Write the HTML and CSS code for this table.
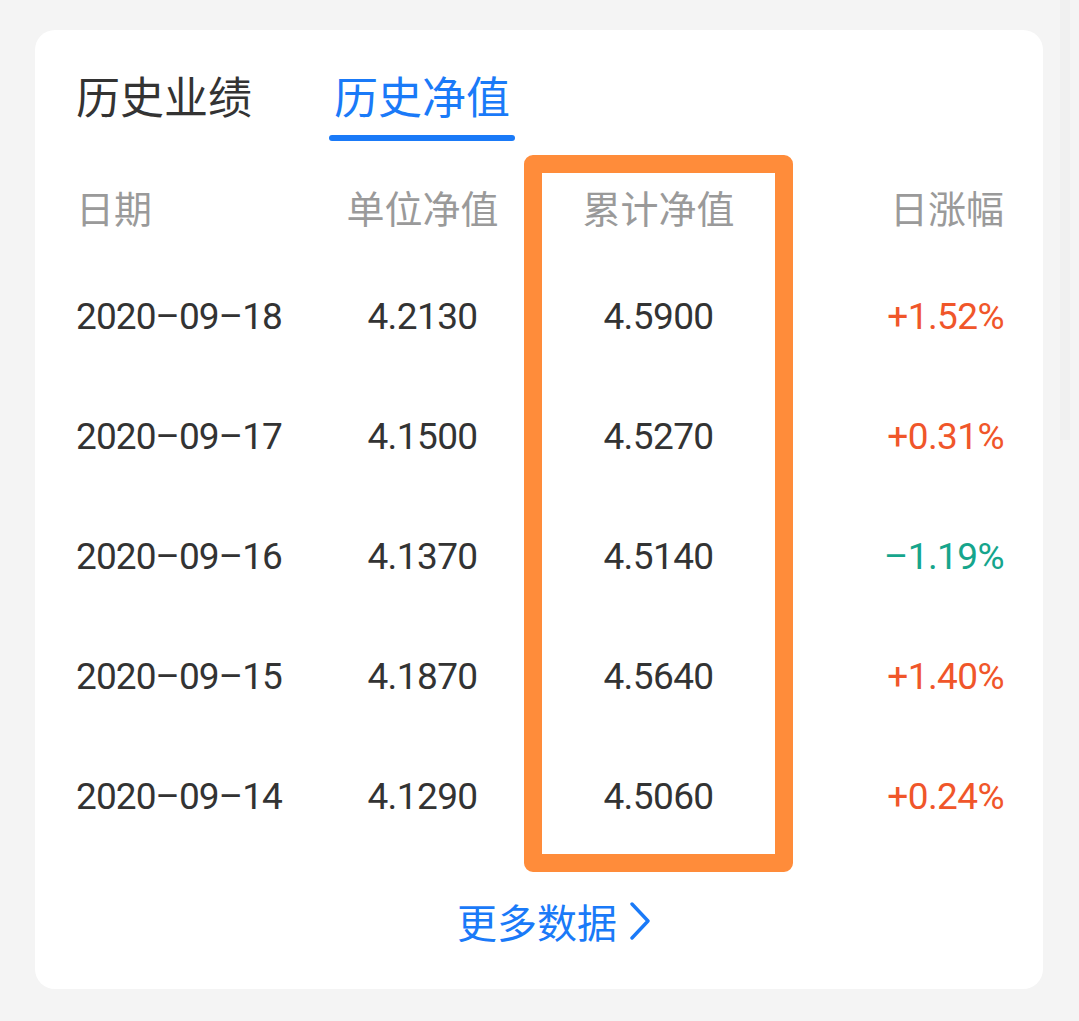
FILE: index.html
```html
<!DOCTYPE html>
<html lang="zh-CN">
<head>
<meta charset="utf-8">
<title>历史净值</title>
<link rel="stylesheet" href="styles.css">
</head>
<body>
<div class="edge-strip"></div>
<section class="card">
  <nav class="tabs">
    <span class="tab">历史业绩</span>
    <span class="tab active">历史净值</span>
  </nav>
  <div class="table">
    <div class="row head">
      <span class="c1">日期</span>
      <span class="c2">单位净值</span>
      <span class="c3">累计净值</span>
      <span class="c4">日涨幅</span>
    </div>
    <div class="row">
      <span class="c1 num date">2020–09–18</span>
      <span class="c2 num">4.2130</span>
      <span class="c3 num">4.5900</span>
      <span class="c4 num up">+1.52%</span>
    </div>
    <div class="row">
      <span class="c1 num date">2020–09–17</span>
      <span class="c2 num">4.1500</span>
      <span class="c3 num">4.5270</span>
      <span class="c4 num up">+0.31%</span>
    </div>
    <div class="row">
      <span class="c1 num date">2020–09–16</span>
      <span class="c2 num">4.1370</span>
      <span class="c3 num">4.5140</span>
      <span class="c4 num down">–1.19%</span>
    </div>
    <div class="row">
      <span class="c1 num date">2020–09–15</span>
      <span class="c2 num">4.1870</span>
      <span class="c3 num">4.5640</span>
      <span class="c4 num up">+1.40%</span>
    </div>
    <div class="row">
      <span class="c1 num date">2020–09–14</span>
      <span class="c2 num">4.1290</span>
      <span class="c3 num">4.5060</span>
      <span class="c4 num up">+0.24%</span>
    </div>
    <div class="highlight"></div>
  </div>
  <a class="more" href="#">更多数据<svg class="chev" width="22" height="38" viewBox="0 0 22 38"><path d="M3 2 L19 19 L3 36" fill="none" stroke="#1a7af8" stroke-width="3.4" stroke-linecap="round" stroke-linejoin="round"/></svg></a>
</section>
</body>
</html>
```
FILE: styles.css
```css
html, body {
  margin: 0;
  padding: 0;
}
body {
  background: #f4f4f4;
  width: 1079px;
  height: 1021px;
  overflow: hidden;
  position: relative;
  font-family: Roboto, "Noto Sans CJK SC", sans-serif;
  color: #333;
}
.edge-strip {
  position: absolute;
  left: 1060px;
  top: 0;
  width: 10px;
  height: 440px;
  background: #f0f0f0;
}
.card {
  position: relative;
  margin: 30px 0 0 35px;
  width: 1008px;
  height: 959px;
  box-sizing: border-box;
  padding: 0 39px 0 41px;
  background: #fff;
  border-radius: 20px;
  display: flex;
  flex-direction: column;
}
.tabs {
  display: flex;
  gap: 82px;
  padding-top: 35px;
  font-family: "Noto Sans CJK SC", sans-serif;
  font-size: 44px;
}
.tab {
  position: relative;
  line-height: 60px;
  padding-bottom: 16px;
  color: #333;
}
.tab.active {
  color: #1a7af8;
}
.tab.active::after {
  content: "";
  position: absolute;
  left: -5px;
  right: -5px;
  bottom: 0;
  height: 6px;
  border-radius: 3px;
  background: #1a7af8;
}
.table {
  position: relative;
  margin-top: 21px;
}
.row {
  display: grid;
  grid-template-columns: 245px 203px 269px 211px;
  align-items: center;
  height: 120px;
}
.row.head {
  height: 94px;
  box-sizing: border-box;
  padding-bottom: 6px;
  font-family: "Noto Sans CJK SC", sans-serif;
  font-size: 38px;
  color: #9a9a9a;
}
.c1 { text-align: left; }
.c2 { text-align: center; }
.c3 { text-align: center; }
.c4 { text-align: right; }
.num {
  font-family: Roboto, sans-serif;
  font-size: 37px;
  letter-spacing: -0.6px;
  color: #333;
}
.num.date {
  letter-spacing: -0.9px;
}
.num.up { color: #f0562a; }
.num.down { color: #16a58c; }
.highlight {
  position: absolute;
  left: 448px;
  top: -7px;
  width: 269px;
  height: 717px;
  box-sizing: border-box;
  border: 18px solid #ff8c3a;
  border-radius: 9px;
}
.more {
  display: flex;
  align-items: center;
  justify-content: center;
  gap: 12px;
  margin-top: 35px;
  padding-left: 28px;
  height: 60px;
  font-family: "Noto Sans CJK SC", sans-serif;
  font-size: 40px;
  color: #1a7af8;
  text-decoration: none;
}
.chev {
  display: block;
}
```
